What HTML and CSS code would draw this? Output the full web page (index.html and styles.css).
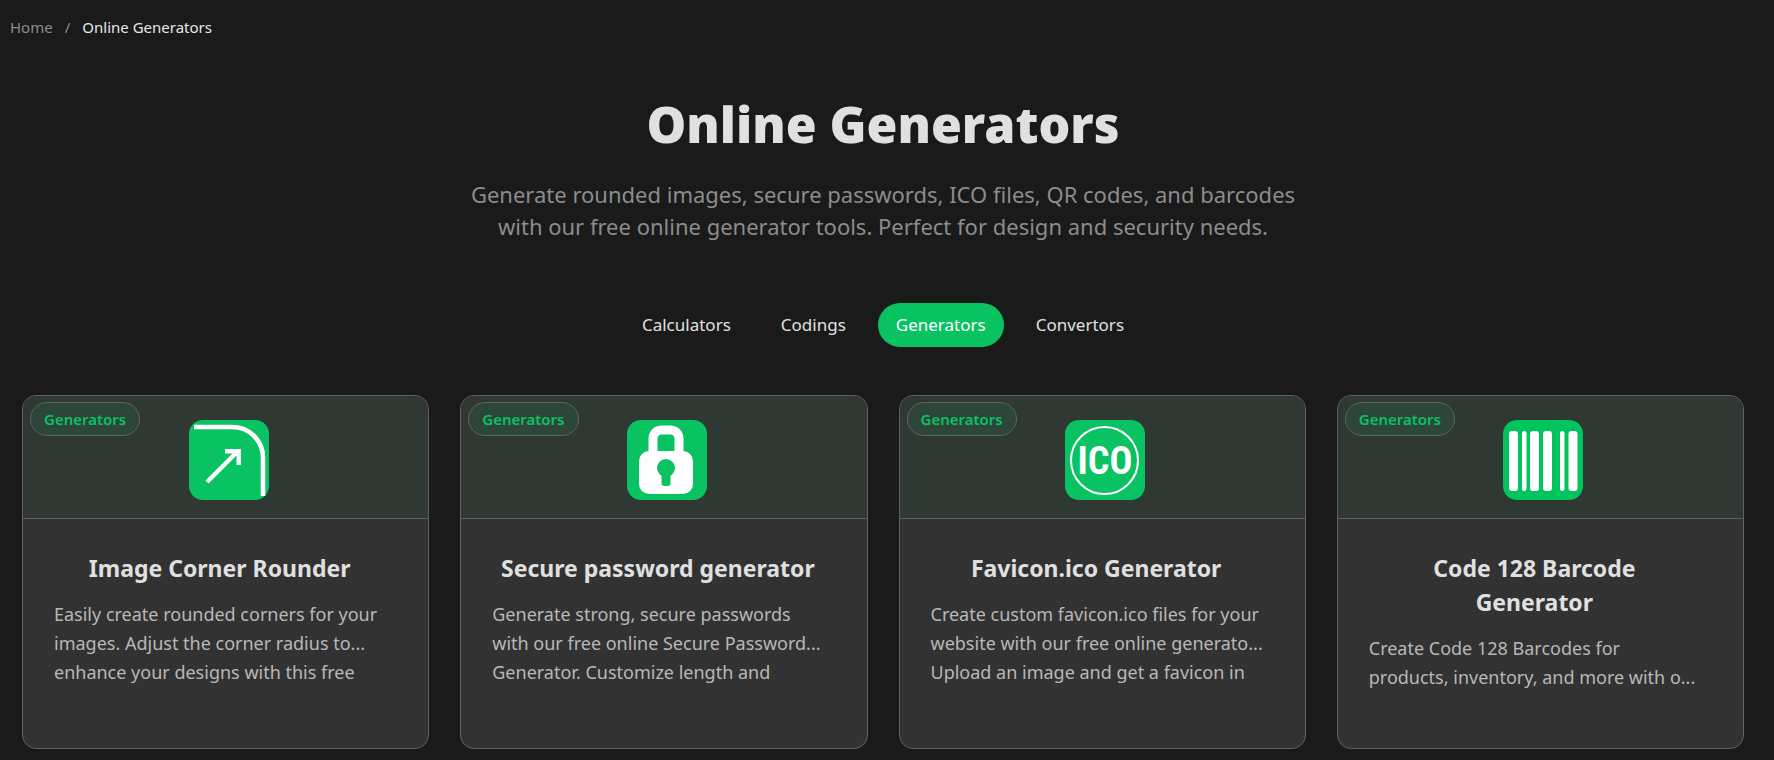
FILE: index.html
```html
<!DOCTYPE html>
<html lang="en">

<head>
    <meta charset="UTF-8">
    <meta name="viewport" content="width=device-width, initial-scale=1.0">
    <title>Online Generators</title>
    <link rel="stylesheet" href="styles.css">
</head>

<body>

    <!-- Breadcrumb -->
    <nav class="breadcrumb" aria-label="Breadcrumb">
        <a href="#">Home</a>
        <span>/</span>
        <a href="#" class="current">Online Generators</a>
    </nav>

    <!-- Page Header -->
    <header class="hero">
        <h1>Online Generators</h1>
        <p>Generate rounded images, secure passwords, ICO files, QR codes, and barcodes<br>
            with our free online generator tools. Perfect for design and security needs.</p>
    </header>

    <!-- Category Tabs -->
    <nav class="tabs" aria-label="Categories">
        <a href="#">Calculators</a>
        <a href="#">Codings</a>
        <a href="#" class="active">Generators</a>
        <a href="#">Convertors</a>
    </nav>

    <!-- Tools -->
    <main class="tool-list">
        <article class="card">
            <div class="card-top">
                <a href="#" class="badge">Generators</a>
                <svg class="icon" viewBox="0 0 80 80" aria-hidden="true">
                    <rect width="80" height="80" rx="14" fill="#09c261" />
                    <path d="M5 7H43C60 7 74 20 74 38V76" fill="none" stroke="#fff" stroke-width="4.6" />
                    <path d="M18 62L48 32M36 31.2H49.7V45" fill="none" stroke="#fff" stroke-width="4.4" />
                </svg>
            </div>
            <div class="card-body">
                <h2>Image Corner Rounder</h2>
                <p>Easily create rounded corners for your<br>images. Adjust the corner radius to...<br>enhance your designs with this free</p>
            </div>
        </article>

        <article class="card">
            <div class="card-top">
                <a href="#" class="badge">Generators</a>
                <svg class="icon" viewBox="0 0 80 80" aria-hidden="true">
                    <rect width="80" height="80" rx="14" fill="#09c261" />
                    <path d="M26 36V19C26 13.500 29.500 10 35 10H43C48.500 10 52 13.500 52 19V36" fill="none" stroke="#fff" stroke-width="9" />
                    <rect x="12" y="31" width="54" height="43" rx="10" fill="#fff" />
                    <circle cx="39" cy="48" r="9" fill="#09c261" />
                    <rect x="34.500" y="50" width="9" height="16" rx="3" fill="#09c261" />
                </svg>
            </div>
            <div class="card-body">
                <h2>Secure password generator</h2>
                <p>Generate strong, secure passwords<br>with our free online Secure Password...<br>Generator. Customize length and</p>
            </div>
        </article>

        <article class="card">
            <div class="card-top">
                <a href="#" class="badge">Generators</a>
                <svg class="icon" viewBox="0 0 80 80" aria-hidden="true">
                    <rect width="80" height="80" rx="14" fill="#09c261" />
                    <circle cx="39.500" cy="40.500" r="33.500" fill="none" stroke="#fff" stroke-width="2" />
                    <text class="ico-text" x="40" y="54" text-anchor="middle">ICO</text>
                </svg>
            </div>
            <div class="card-body">
                <h2>Favicon.ico Generator</h2>
                <p>Create custom favicon.ico files for your<br>website with our free online generato...<br>Upload an image and get a favicon in</p>
            </div>
        </article>

        <article class="card">
            <div class="card-top">
                <a href="#" class="badge">Generators</a>
                <svg class="icon" viewBox="0 0 80 80" aria-hidden="true">
                    <rect width="80" height="80" rx="14" fill="#00c45e" />
                    <g fill="#fff">
                        <rect x="6" y="11" width="9" height="60" rx="3" />
                        <rect x="19" y="11" width="4.500" height="60" rx="2.200" />
                        <rect x="27" y="11" width="9" height="60" rx="3" />
                        <rect x="40" y="11" width="9" height="60" rx="3" />
                        <rect x="57" y="11" width="4.500" height="60" rx="2.200" />
                        <rect x="65.500" y="11" width="9" height="60" rx="3" />
                    </g>
                </svg>
            </div>
            <div class="card-body">
                <h2>Code 128 Barcode<br>Generator</h2>
                <p>Create Code 128 Barcodes for<br>products, inventory, and more with o...</p>
            </div>
        </article>
    </main>

</body>

</html>
```

FILE: styles.css
```css
/* Global Styles */
* {
    box-sizing: border-box;
}

body {
    font-family: "Noto Sans", "Open Sans", sans-serif;
    background-color: #1a1a1a;
    color: #e0e0e0;
    margin: 0;
}

a {
    color: inherit;
    text-decoration: none;
}

/* Breadcrumb */
.breadcrumb {
    display: flex;
    gap: 12px;
    padding: 15px 10px;
    font-size: 15px;
    line-height: 24px;
    color: #8c8c8c;
}

.breadcrumb .current {
    color: #e8e8e8;
}

/* Page Header */
.hero {
    text-align: center;
    padding: 34px 30px 0 22px;
}

.hero h1 {
    margin: 0;
    font-size: 50px;
    font-weight: 900;
    line-height: 72px;
}

.hero p {
    margin: 18px 0 0;
    font-size: 22px;
    line-height: 32px;
    color: #8c8c8c;
}

/* Category Tabs */
.tabs {
    display: flex;
    justify-content: center;
    gap: 14px;
    padding: 61px 30px 48px 22px;
    font-size: 17px;
    line-height: 44px;
}

.tabs a {
    padding: 0 18px;
    border-radius: 22px;
}

.tabs .active {
    background-color: #09c261;
    color: white;
}

/* Tool Cards */
.tool-list {
    display: grid;
    grid-template-columns: repeat(4, 1fr);
    gap: 31px;
    padding: 0 30px 11px 22px;
}

.card {
    background-color: #323232;
    border: 1px solid #616161;
    border-radius: 14px;
    overflow: hidden;
}

.card-top {
    position: relative;
    display: flex;
    justify-content: center;
    padding: 24px 0 18px 6px;
    background-color: #303833;
    border-bottom: 1px solid #616161;
}

.badge {
    position: absolute;
    top: 6px;
    left: 7px;
    padding: 0 13px;
    border: 1px solid #616161;
    border-radius: 17px;
    background-color: #2d463a;
    color: #09c261;
    font-size: 15px;
    font-weight: 600;
    line-height: 32px;
}

.icon {
    width: 80px;
    height: 80px;
}

.ico-text {
    font-family: "Liberation Sans Narrow", "Roboto Condensed", "Open Sans Condensed", Roboto, sans-serif;
    font-size: 38px;
    font-weight: 700;
    fill: white;
}

.card-body {
    height: 229px;
    padding: 32px 43px 0 31px;
}

.card-body h2 {
    margin: 0 0 15px;
    font-size: 23px;
    font-weight: 700;
    line-height: 34px;
    text-align: center;
}

.card-body p {
    margin: 0;
    font-size: 18px;
    line-height: 29px;
    white-space: nowrap;
    color: #b8b8b8;
}

/* Responsive Design */
@media (max-width: 1400px) {
    .tool-list {
        grid-template-columns: repeat(auto-fill, minmax(390px, 1fr));
    }
}
```
